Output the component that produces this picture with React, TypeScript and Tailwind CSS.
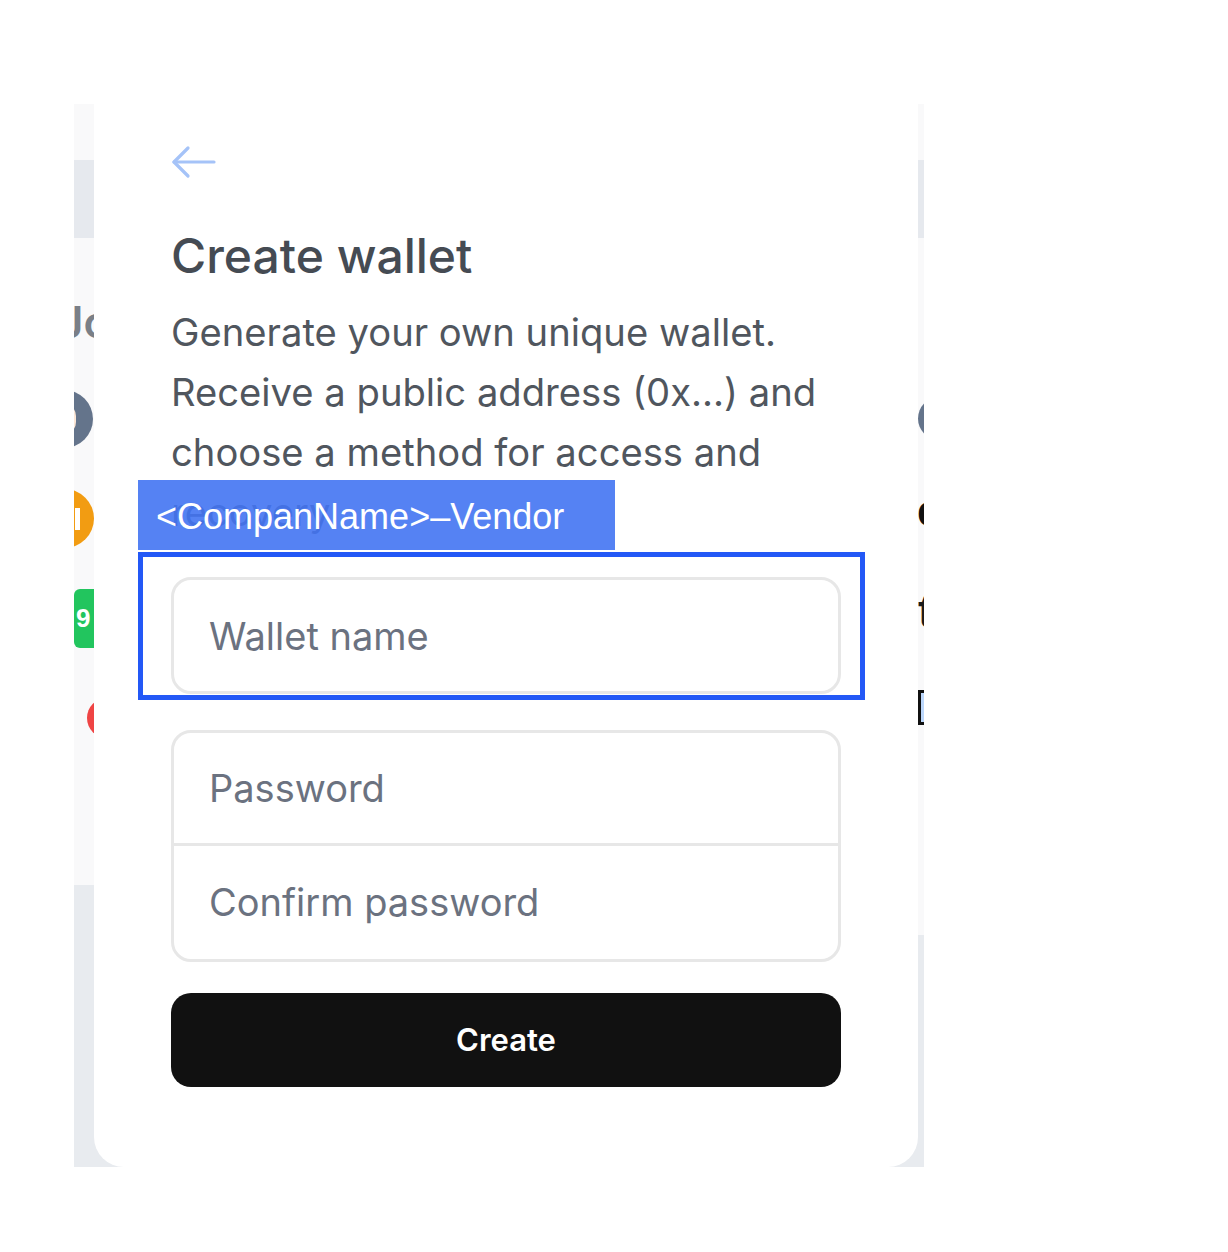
import React from 'react';

const BackArrow: React.FC = () => (
  <svg width="46" height="34" viewBox="0 0 46 34" fill="none" className="block -ml-px">
    <path d="M44 17H4" stroke="#a5c3f8" strokeWidth="3.2" strokeLinecap="round" />
    <path d="M18 3L4 17l14 14" stroke="#a5c3f8" strokeWidth="3.2" strokeLinecap="round" strokeLinejoin="round" />
  </svg>
);

const App: React.FC = () => {
  return (
    <div className="relative w-[1228px] h-[1252px] bg-white pt-[104px] pl-[74px]">
      {/* page behind the dialog */}
      <div className="relative w-[850px] h-[1063px] overflow-hidden bg-[#f9f9fa]">
        <div className="flex h-full flex-col">
          <div className="h-[56px] shrink-0" />
          <div className="h-[78px] shrink-0 bg-[#e6e9ee]" />
          <div className="flex flex-1">
            <div className="flex w-[420px] flex-col">
              <div className="mt-[62px] -ml-[16px] text-[44px] leading-none font-semibold text-[#7a7f87] [font-family:Inter,sans-serif]">
                John
              </div>
              <div className="mt-[46px] -ml-[39px] flex h-[58px] w-[58px] items-center justify-center rounded-full bg-[#64748b]">
                <div className="h-[30px] w-[24px] rounded-full border-[4px] border-[#fbe6d6]" />
              </div>
              <div className="mt-[41px] -ml-[39px] flex h-[59px] w-[59px] items-center justify-end rounded-full bg-[#f29c12] pr-[14px]">
                <div className="h-[22px] w-[5px] bg-white" />
              </div>
              <div className="mt-[41px] flex h-[59px] w-[120px] items-center rounded-[6px] bg-[#22c55e] pl-[2px] text-[26px] font-bold text-white [font-family:'Liberation_Sans',sans-serif]">
                9
              </div>
              <div className="mt-[50px] ml-[13px] h-[40px] w-[40px] rounded-full bg-[#ef4444]" />
              <div className="mt-[147px] flex-1 bg-[#e8ebef]" />
            </div>
            <div className="flex w-[430px] flex-col">
              <div className="mt-[159px] ml-[424px] h-[43px] w-[43px] rounded-full bg-[#64748b]" />
              <div className="mt-[49px] ml-[423px] w-[60px] text-[44px] leading-none font-bold text-[#111] [font-family:'Liberation_Sans',sans-serif]">
                e
              </div>
              <div className="mt-[55px] ml-[424px] w-[60px] text-[46px] leading-none font-bold text-[#1a1a1a] [font-family:'Liberation_Sans',sans-serif]">
                t
              </div>
              <div className="mt-[56px] ml-[424px] h-[35px] w-[30px] border-[3px] border-[#111] bg-[#bcd7fb]" />
              <div className="mt-[210px] flex-1 bg-[#e8ebef]" />
            </div>
          </div>
        </div>

        {/* dialog */}
        <div className="absolute left-[20px] top-0 h-[1063px] w-[824px] rounded-b-[30px] bg-white px-[77px] pt-[41px] [font-family:Inter,sans-serif]">
          <BackArrow />
          <h1 className="mt-[53px] text-[48px] leading-none font-medium text-[#454b53]">Create wallet</h1>
          <p className="mt-[22px] text-[38.2px] leading-[60px] text-[#50565e]">
            Generate your own unique wallet.
            <br />
            Receive a public address (0x...) and
            <br />
            choose a method for access and
            <br />
            recovery
          </p>
          <div className="mt-[35px] h-[117px] rounded-[20px] border-[3px] border-[#e7e7e7] bg-white">
            <input
              type="text"
              placeholder="Wallet name"
              className="h-full w-full rounded-[18px] bg-transparent pl-[35px] text-[38px] text-[#1f2937] outline-none placeholder:text-[#6b7280]"
            />
          </div>
          <div className="mt-[36px] flex h-[232px] flex-col rounded-[20px] border-[3px] border-[#e7e7e7] bg-white">
            <input
              type="password"
              placeholder="Password"
              className="h-[113px] w-full rounded-t-[18px] border-b-[3px] border-[#e7e7e7] bg-transparent pl-[35px] text-[38px] outline-none placeholder:text-[#6b7280]"
            />
            <input
              type="password"
              placeholder="Confirm password"
              className="flex-1 w-full rounded-b-[18px] bg-transparent pl-[35px] text-[38px] outline-none placeholder:text-[#6b7280]"
            />
          </div>
          <button className="mt-[31px] h-[94px] w-full rounded-[20px] bg-[#111111] text-[31px] font-semibold text-white">
            Create
          </button>
        </div>
      </div>

      {/* annotation overlay */}
      <div className="absolute left-[138px] top-[480px] flex h-[70px] w-[477px] items-center bg-[#4374f2]/90 pl-[18px] pt-[4px] text-[36px] text-white [font-family:'Liberation_Sans',sans-serif]">
        &lt;CompanName&gt;–Vendor
      </div>
      <div className="absolute left-[138px] top-[552px] h-[148px] w-[727px] border-[5px] border-[#2358f6]" />
    </div>
  );
};

export default App;
